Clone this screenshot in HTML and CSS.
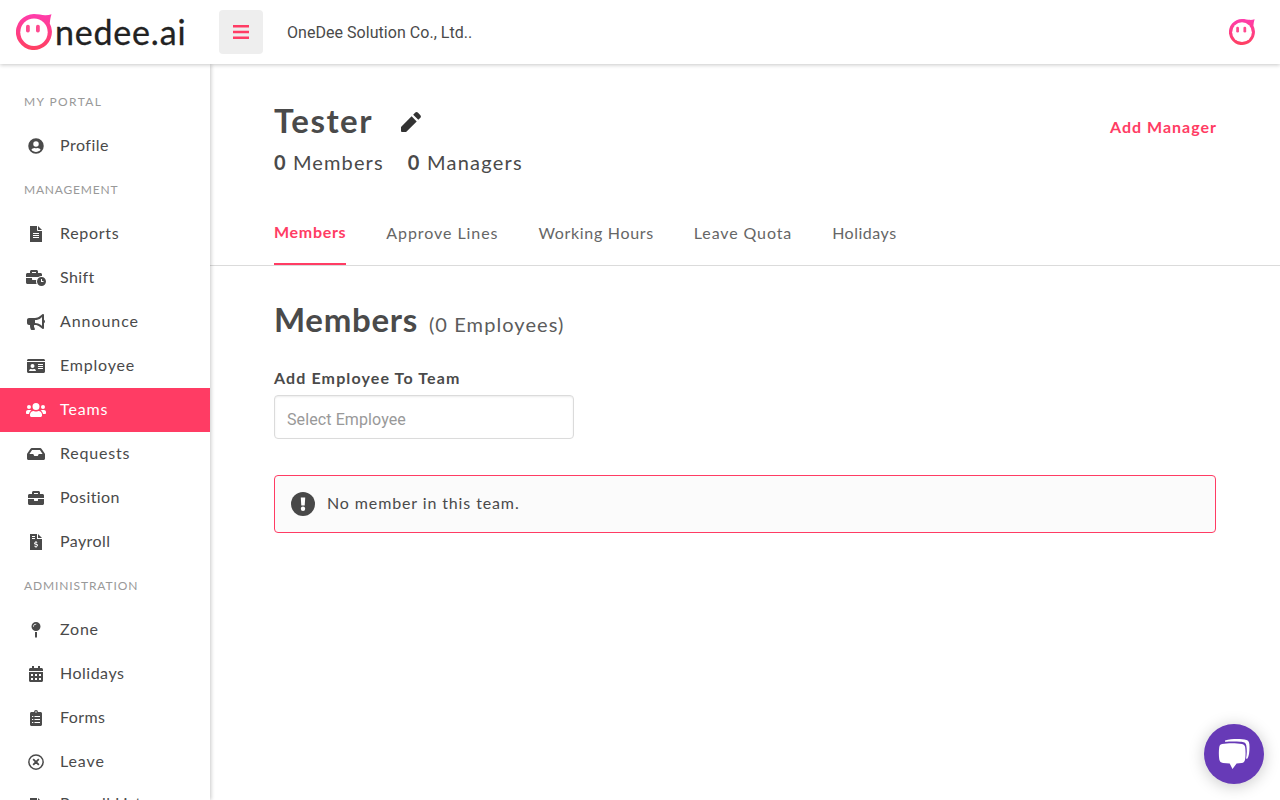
FILE: index.html
```html
<!DOCTYPE html>
<html lang="en">
<head>
<meta charset="utf-8">
<title>Teams</title>
<link rel="stylesheet" href="styles.css">
</head>
<body>
<svg class="defs" width="0" height="0" aria-hidden="true">
  <defs>
    <linearGradient id="pink" x1="0" y1="0" x2="0" y2="1"><stop offset="0" stop-color="#ff3cac"/><stop offset="1" stop-color="#ff4060"/></linearGradient>
    <symbol id="face" viewBox="0 0 36 36">
      <path fill="url(#pink)" d="M18 0c4 0 8 1 11 1.200 2.200.100 4.300-.300 6.500-.900-.9 2.500-1.400 5.500-1.700 9.200A18 18 0 1 1 18 0z"/>
      <circle cx="18" cy="18.200" r="13.700" fill="#fff"/>
      <rect x="10" y="10.800" width="3.800" height="7.800" rx="1.800" fill="#ff4a90"/>
      <rect x="20" y="10.800" width="3.800" height="7.800" rx="1.800" fill="#ff4a90"/>
    </symbol>
  </defs>
</svg>
<header class="topbar">
  <a class="brand"><svg class="brand-face"><use href="#face"/></svg><span class="brand-name">nedee.ai</span></a>
  <button class="burger" aria-label="Menu"><svg viewBox="0 0 16 14" width="16" height="14"><path d="M0 0h16v2.500H0zM0 5.800h16v2.500H0zM0 11.500h16V14H0z" fill="#ff3c64"/></svg></button>
  <span class="company">OneDee Solution Co., Ltd..</span>
  <svg class="avatar"><use href="#face"/></svg>
</header>
<div class="shell">
  <nav class="sidebar">
    <h6 class="group portal">MY PORTAL</h6>
    <a class="item"><svg viewBox="0 0 496 512"><path d="M248 8a248 248 0 1 0 0 496 248 248 0 0 0 0-496zm0 96a88 88 0 1 1 0 176 88 88 0 0 1 0-176zm0 344c-58.700 0-111.300-26.600-146.500-68.200 18.800-35.400 55.600-59.800 98.500-59.800 2.400 0 4.800.4 7.100 1.100 13 4.200 26.600 6.900 40.900 6.900s28-2.700 40.900-6.900c2.300-.7 4.700-1.100 7.100-1.100 42.900 0 79.700 24.400 98.500 59.800C359.300 421.400 306.700 448 248 448z"/></svg><span class="t-profile">Profile</span></a>
    <h6 class="group management">MANAGEMENT</h6>
    <a class="item"><svg viewBox="0 0 384 512"><path d="M224 136V0H0v512h384V160H248c-13 0-24-11-24-24zm64 248H96v-32h192zm0-64H96v-32h192zm0-64H96v-32h192zM384 128H256V0z"/></svg><span class="t-reports">Reports</span></a>
    <a class="item"><svg viewBox="0 0 640 512"><path d="M496 224c-79.600 0-144 64.400-144 144s64.400 144 144 144 144-64.400 144-144-64.400-144-144-144zm64 150.300c0 5.300-4.400 9.700-9.700 9.700h-60.600c-5.300 0-9.700-4.400-9.700-9.700v-76.600c0-5.300 4.400-9.700 9.700-9.700h12.600c5.300 0 9.700 4.400 9.700 9.700V352h38.300c5.300 0 9.700 4.400 9.700 9.700zM496 192c5.400 0 10.700.4 16 .9V144c0-25.600-22.400-48-48-48h-80V48c0-25.600-22.400-48-48-48H176c-25.600 0-48 22.400-48 48v48H48c-25.600 0-48 22.400-48 48v80h395.100c28.600-20.100 63.400-32 100.900-32zM320 96H192V64h128zm6.800 224H208c-8.800 0-16-7.200-16-16v-48H0v144c0 25.600 22.400 48 48 48h291.400a175 175 0 0 1-12.600-128z"/></svg><span class="t-shift">Shift</span></a>
    <a class="item"><svg viewBox="0 0 576 512"><path d="M576 240c0-23.600-13-44-32-55.100V32c0-8.700-7-32-32-32-7.100 0-14.200 2.400-20 7l-85 68c-42.700 34.100-96.300 53-151 53H64c-35.300 0-64 28.700-64 64v96c0 35.300 28.700 64 64 64h33.700c-4.500 35.400 2.700 80.500 20.400 139.200 3.500 11.400 16.200 20.800 30.100 20.800h74.300c26 0 41.600-29.800 25.900-50.600A128 128 0 0 1 227 352h29c54.700 0 108.300 18.900 151 53l85 68c5.700 4.500 12.700 7 20 7 24.900 0 32-22.800 32-32V295.100c19-11.100 32-31.500 32-55.100zm-96 141.400-33-26.400c-54-43.200-121.900-67-191-67v-96c69.100 0 137-23.800 191-67l33-26.400z"/></svg><span class="t-announce">Announce</span></a>
    <a class="item"><svg viewBox="0 0 576 512"><path d="M528 32H48C21.500 32 0 53.500 0 80v16h576V80c0-26.500-21.500-48-48-48zM0 432c0 26.500 21.500 48 48 48h480c26.500 0 48-21.500 48-48V128H0zm352-232c0-4.400 3.600-8 8-8h144c4.400 0 8 3.600 8 8v16c0 4.400-3.600 8-8 8H360c-4.400 0-8-3.600-8-8zm0 64c0-4.400 3.600-8 8-8h144c4.400 0 8 3.600 8 8v16c0 4.400-3.600 8-8 8H360c-4.400 0-8-3.600-8-8zm0 64c0-4.400 3.600-8 8-8h144c4.400 0 8 3.600 8 8v16c0 4.400-3.600 8-8 8H360c-4.400 0-8-3.600-8-8zM176 192a64 64 0 1 1 0 128 64 64 0 0 1 0-128zM67.100 396.200C75.500 370.500 99.600 352 128 352h8.200a103 103 0 0 0 79.600 0h8.200c28.400 0 52.500 18.500 60.900 44.200 3.200 9.900-5.200 19.800-15.600 19.800H82.700c-10.400 0-18.800-10-15.600-19.800z"/></svg><span class="t-employee">Employee</span></a>
    <a class="item active"><svg viewBox="0 0 640 512"><path d="M96 224a64 64 0 1 0 0-128 64 64 0 0 0 0 128zm448 0a64 64 0 1 0 0-128 64 64 0 0 0 0 128zm32 32h-64c-17.600 0-33.500 7.100-45.100 18.600 40.300 22.100 68.900 62 75.100 109.400h66c17.700 0 32-14.300 32-32v-32c0-35.300-28.700-64-64-64zm-256 0a112 112 0 1 0 0-224 112 112 0 0 0 0 224zm76.800 32h-8.300a157 157 0 0 1-137 0h-8.300C179.600 288 128 339.600 128 403.200V432c0 26.500 21.500 48 48 48h288c26.500 0 48-21.500 48-48v-28.800c0-63.600-51.600-115.200-115.200-115.200zm-223.700-13.400A63 63 0 0 0 128 256H64c-35.300 0-64 28.700-64 64v32c0 17.700 14.300 32 32 32h65.900c6.300-47.400 34.900-87.300 75.200-109.400z"/></svg><span class="t-teams">Teams</span></a>
    <a class="item"><svg viewBox="0 0 576 512"><path d="M567.900 243.900 462.400 85.700A48 48 0 0 0 422.500 64h-269a48 48 0 0 0-39.900 21.400L8.100 243.900A48 48 0 0 0 0 270.500V400c0 26.500 21.500 48 48 48h480c26.500 0 48-21.500 48-48V270.500a48 48 0 0 0-8.100-26.600zM162.300 128h251.500l85.300 128H376l-32 64H232l-32-64H76.900z"/></svg><span class="t-requests">Requests</span></a>
    <a class="item"><svg viewBox="0 0 512 512"><path d="M320 336c0 8.800-7.200 16-16 16h-96c-8.800 0-16-7.200-16-16v-48H0v144c0 25.600 22.400 48 48 48h416c25.600 0 48-22.400 48-48V288H320zm144-208h-80V80c0-25.600-22.400-48-48-48H176c-25.600 0-48 22.400-48 48v48H48c-25.600 0-48 22.400-48 48v80h512v-80c0-25.600-22.400-48-48-48zm-144 0H192V96h128z"/></svg><span class="t-position">Position</span></a>
    <a class="item"><svg viewBox="0 0 384 512"><path fill-rule="evenodd" d="M256 0v128h128zM0 0h224v160h160v352H0zm64 64v32h96V64zm0 64v32h96v-32zm112 96v28c-28 2-46 22-46 46 0 60 88 40 88 66 0 22-44 20-64 4l-20 22c12 10 26 16 42 18v28h32v-28c28-3 46-22 46-47 0-58-88-42-88-64 0-16 34-18 56-4l18-24c-10-8-20-13-32-15v-30z"/></svg><span class="t-payroll">Payroll</span></a>
    <h6 class="group administration">ADMINISTRATION</h6>
    <a class="item"><svg viewBox="0 0 288 512"><path d="M112 316.900v156.700l22 33c4.800 7.100 15.200 7.100 20 0l22-33V316.900a178 178 0 0 1-64 0zM144 0a144 144 0 1 0 0 288 144 144 0 0 0 0-288zm0 76c-37.500 0-68 30.500-68 68 0 6.600-5.400 12-12 12s-12-5.400-12-12c0-50.700 41.300-92 92-92 6.600 0 12 5.400 12 12s-5.400 12-12 12z"/></svg><span class="t-zone">Zone</span></a>
    <a class="item"><svg viewBox="0 0 448 512"><path fill-rule="evenodd" d="M0 144V112c0-26 22-48 48-48h48V0h64v64h128V0h64v64h48c26 0 48 22 48 48v48H0zM0 192h448v272c0 26-22 48-48 48H48c-26 0-48-22-48-48zm64 64v64h64v-64zm128 0v64h64v-64zm128 0v64h64v-64zM64 384v64h64v-64zm128 0v64h64v-64zm128 0v64h64v-64z"/></svg><span class="t-holidays">Holidays</span></a>
    <a class="item"><svg viewBox="0 0 384 512"><path fill-rule="evenodd" d="M336 64h-80a64 64 0 0 0-128 0H48C21 64 0 85 0 112v352c0 27 21 48 48 48h288c27 0 48-21 48-48V112c0-27-21-48-48-48zM192 40a24 24 0 1 1 0 48 24 24 0 0 1 0-48zM64 192h40v32H64zm80 0h176v32H144zM64 288h40v32H64zm80 0h176v32H144zM64 384h40v32H64zm80 0h176v32H144z"/></svg><span class="t-forms">Forms</span></a>
    <a class="item"><svg viewBox="0 0 512 512"><g fill="none" stroke="#4a4a4a" stroke-width="48"><circle cx="256" cy="256" r="228"/><path stroke-width="58" d="m165 165 182 182M347 165 165 347"/></g></svg><span class="t-leave">Leave</span></a>
    <a class="item last"><svg viewBox="0 0 384 512"><path d="M224 136V0H0v512h384V160H248c-13 0-24-11-24-24zM384 128H256V0z"/></svg><span class="t-payroll">Payroll List</span></a>
  </nav>
  <main class="content">
    <section class="heading">
      <div class="title-row">
        <h1 class="team-name">Tester</h1>
        <svg class="pencil" viewBox="0 0 20 20"><path d="M0 14.900V19q0 1 1 1h4.100L15.700 9.400l-5.100-5.100zM19.400 5.700a2 2 0 0 0 0-2.500L16.800.6a2 2 0 0 0-2.500 0L12.200 2.700l5.100 5.100z" fill="#333"/></svg>
        <a class="add-manager">Add Manager</a>
      </div>
      <div class="stats"><span class="count-members"><b>0</b> Members</span><span class="count-managers"><b>0</b> Managers</span></div>
    </section>
    <div class="tabs">
      <a class="tab selected">Members</a><a class="tab t-approve">Approve Lines</a><a class="tab t-working">Working Hours</a><a class="tab t-quota">Leave Quota</a><a class="tab t-holidays">Holidays</a>
    </div>
    <section class="panel">
      <div class="panel-title"><h2>Members</h2><span>(0 Employees)</span></div>
      <label class="field-label">Add Employee To Team</label>
      <div class="select">Select Employee</div>
      <div class="notice"><svg viewBox="0 0 24 24" width="24" height="24"><circle cx="12" cy="12" r="12" fill="#484848"/><path d="M9.800 5.500h4.400l-.5 8h-3.400z" fill="#fff"/><circle cx="12" cy="16.800" r="2.200" fill="#fff"/></svg><span>No member in this team.</span></div>
    </section>
  </main>
</div>
<button class="chat" aria-label="Chat"><svg viewBox="0 0 32 32" width="32" height="32"><path d="M7 2.500C14 .700 23 .700 28.500 2 31 2.600 31.500 5 31.500 9c0 5-.5 9-2 11.500l-1.500.300C29 16 29 11 28.300 7.500 27.800 4.500 26 3.900 22 3.700 17 3.400 11 3.500 7 3.800z" fill="#fff"/><path d="M4 6C10 5 18 5 24 6c2 .400 3 1.500 3.200 3.500.500 4 .500 8-.1 12-.3 2-1.500 3.300-3.500 3.600l-5 .5L14.500 31l-2.800-5.400L5 25c-2-.3-3.400-1.500-3.700-3.500-.6-4-.6-8-.1-12C1.400 7.500 2.300 6.300 4 6z" fill="#fff"/></svg></button>
</body>
</html>
```
FILE: styles.css
```css
* { box-sizing: border-box; }
body { margin: 0; height: 800px; overflow: hidden; background: #fff; color: #4a4a4a; font: 16px/24px Lato, sans-serif; position: relative; display: flex; flex-direction: column; }
h1, h2, h6 { margin: 0; }
button { border: 0; padding: 0; display: flex; align-items: center; justify-content: center; }
.defs { position: absolute; }

.topbar { height: 64px; flex: none; display: flex; align-items: center; background: #fff; box-shadow: 0 1px 4px rgba(0,0,0,.22); z-index: 2; padding: 0 24px 0 16px; }
.brand { width: 203px; display: flex; align-items: center; }
.brand-face { width: 36px; height: 36px; flex: none; }
.brand-name { font-size: 34px; line-height: 36px; color: #222; margin-left: 3px; letter-spacing: .8px; -webkit-text-stroke: .3px #222; }
.burger { width: 44px; height: 44px; border-radius: 4px; background: #eee; }
.company { font-family: Roboto, sans-serif; margin-left: 24px; padding-top: 2px; letter-spacing: .04px; }
.avatar { width: 26px; height: 26px; margin-left: auto; margin-right: 1px; }

.shell { display: flex; flex: 1; min-height: 0; }
.sidebar { width: 210px; flex: none; padding-top: 16px; box-shadow: 1px 0 4px rgba(0,0,0,.22); overflow: hidden; z-index: 1; }
.group { height: 44px; padding: 0 24px; font-size: 12px; line-height: 44px; font-weight: 400; color: #999; white-space: nowrap; }
.portal { letter-spacing: 1.4px; }
.management { letter-spacing: .8px; }
.administration { letter-spacing: .88px; }
.item { height: 44px; padding-left: 24px; display: flex; align-items: center; gap: 12px; white-space: nowrap; }
.item svg { width: 24px; height: 16px; fill: #4a4a4a; }
.item span { padding-bottom: 2px; }
.item.last span { padding-bottom: 6px; }
.active { background: #ff3c64; color: #fff; }
.active svg { fill: #fff; }
.t-profile, .t-holidays { letter-spacing: .5px; }
.t-reports, .t-working { letter-spacing: .68px; }
.t-shift, .t-position, .t-payroll, .t-forms { letter-spacing: .42px; }
.t-announce, .t-approve { letter-spacing: .93px; }
.t-employee, .t-requests, .t-zone { letter-spacing: .78px; }
.t-teams, .t-leave, .t-quota { letter-spacing: .88px; }

.content { flex: 1; min-width: 0; }
.heading { padding: 33px 64px 0; height: 137px; }
.title-row { display: flex; align-items: center; height: 48px; }
.team-name { font-size: 33px; line-height: 46px; padding-bottom: 2px; letter-spacing: 1.5px; }
.pencil { width: 20px; height: 20px; margin: 2px 0 0 28px; }
.add-manager { margin-left: auto; margin-right: -1px; color: #ff3c64; font-weight: 700; padding-top: 11px; letter-spacing: 1px; }
.stats { display: flex; gap: 24px; font-size: 20px; line-height: 35px; }
.count-members { letter-spacing: 1.12px; }
.count-managers { letter-spacing: 1.25px; }
.tabs { display: flex; gap: 40px; height: 65px; padding: 0 64px; border-bottom: 1px solid #dbdbdb; color: #666; }
.tab { height: 64px; line-height: 64px; white-space: nowrap; }
.selected { color: #ff3c64; font-weight: 700; line-height: 62px; border-bottom: 2px solid #ff3c64; letter-spacing: .7px; }
.panel { padding: 29px 64px 0; }
.panel-title { display: flex; align-items: baseline; gap: 11px; height: 48px; line-height: 48px; }
.panel-title h2 { font-size: 33px; letter-spacing: .7px; }
.panel-title span { font-size: 20px; line-height: 44px; padding-bottom: 1px; color: #5c5c5c; letter-spacing: 1.08px; }
.field-label { display: block; font-weight: 700; margin-top: 23px; letter-spacing: 1.12px; }
.select { width: 300px; height: 44px; margin-top: 5px; padding: 0 12px; border: 1px solid #dbdbdb; border-radius: 4px; box-shadow: inset 0 1px 2px rgba(10,10,10,.08); line-height: 47px; font-family: Roboto, sans-serif; letter-spacing: .1px; color: #999; }
.notice { display: flex; align-items: center; gap: 12px; height: 58px; margin-top: 36px; padding: 0 16px; border: 1px solid #ff3c64; border-radius: 4px; background: #fbfbfb; letter-spacing: .88px; }
.notice span { padding-bottom: 2px; }
.chat { position: absolute; right: 16px; bottom: 16px; width: 60px; height: 60px; border-radius: 50%; background: #673ab7; box-shadow: 0 2px 16px rgba(0,0,0,.22); z-index: 3; }
```
